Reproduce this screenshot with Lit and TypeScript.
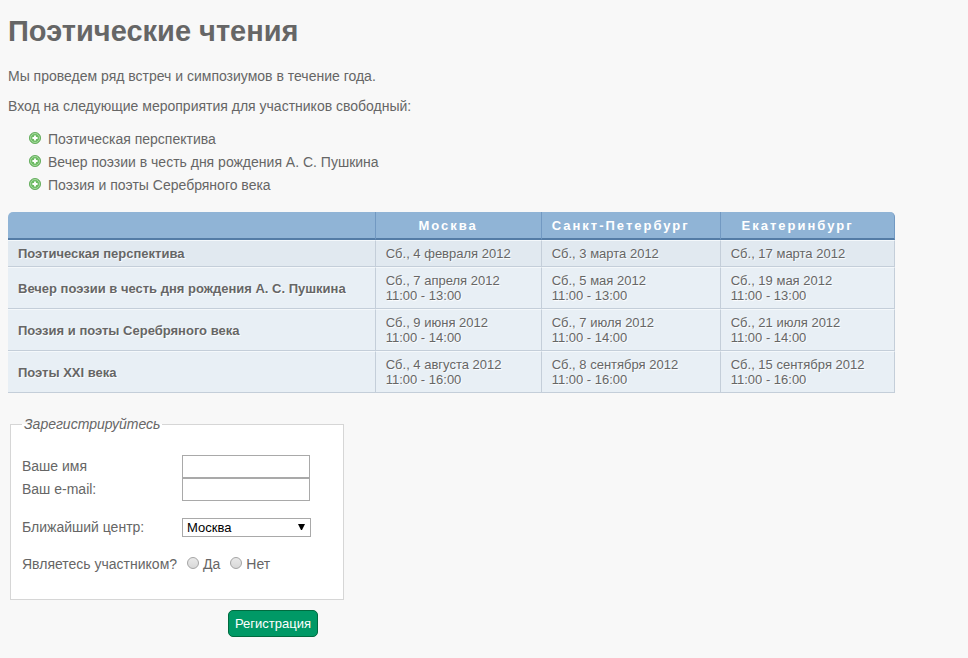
import { LitElement, html, css, svg } from "lit";
import { customElement, state } from "lit/decorators.js";

interface EventRow {
  title: string;
  dates: string[];
  hours?: string;
}

const FREE_EVENTS = [
  "Поэтическая перспектива",
  "Вечер поэзии в честь дня рождения А. С. Пушкина",
  "Поэзия и поэты Серебряного века",
];

const CITIES = ["Москва", "Санкт-Петербург", "Екатеринбург"];

const SCHEDULE: EventRow[] = [
  {
    title: "Поэтическая перспектива",
    dates: ["Сб., 4 февраля 2012", "Сб., 3 марта 2012", "Сб., 17 марта 2012"],
  },
  {
    title: "Вечер поэзии в честь дня рождения А. С. Пушкина",
    dates: ["Сб., 7 апреля 2012", "Сб., 5 мая 2012", "Сб., 19 мая 2012"],
    hours: "11:00 - 13:00",
  },
  {
    title: "Поэзия и поэты Серебряного века",
    dates: ["Сб., 9 июня 2012", "Сб., 7 июля 2012", "Сб., 21 июля 2012"],
    hours: "11:00 - 14:00",
  },
  {
    title: "Поэты XXI века",
    dates: ["Сб., 4 августа 2012", "Сб., 8 сентября 2012", "Сб., 15 сентября 2012"],
    hours: "11:00 - 16:00",
  },
];

const plusIcon = svg`
  <circle cx="6" cy="6" r="5.6" fill="#6cbb62" stroke="#5aa653" stroke-width="0.8"/>
  <circle cx="6" cy="6" r="4.5" fill="none" stroke="#b4dfad" stroke-width="0.8"/>
  <path d="M6 3.4v5.2M3.4 6h5.2" stroke="#fff" stroke-width="1.9"/>`;

@customElement("app-root")
export class AppRoot extends LitElement {
  @state() private member = "";

  static styles = css`
    :host {
      display: block;
      box-sizing: border-box;
      min-height: 100vh;
      padding: 14px 8px 20px;
      background: #f8f8f8;
      color: #666;
      font: 14px/16px "Liberation Sans", Arial, sans-serif;
    }
    .title {
      margin: 0 0 20px;
      font-size: 29px;
      line-height: 34px;
    }
    .text {
      margin: 0 0 14px;
    }
    .events {
      margin: 0 0 15px;
      padding: 0 0 0 20px;
      list-style: none;
      line-height: 23px;
    }
    .event {
      display: flex;
      gap: 7px;
    }
    .icon {
      flex: none;
      width: 12px;
      height: 12px;
      margin: 4px 0 0 1px;
    }
    .schedule {
      border-collapse: separate;
      border-spacing: 0;
      font-size: 13px;
      line-height: 15px;
      text-shadow: 1px 1px 1px #fff;
    }
    .head,
    .name,
    .date {
      padding: 5px 30px 5px 10px;
      border: 0 solid #c4ced9;
      border-width: 1px 1px 1px 0;
      border-top-color: #f4f8fb;
      background: #e8eff5;
      text-align: left;
      white-space: nowrap;
    }
    .name {
      padding-right: 29px;
    }
    .head {
      border-width: 0 1px 2px 0;
      border-color: #7299c2;
      border-bottom-color: #547ca6;
      padding-top: 6px;
      background: #90b4d6;
      color: #fff;
      letter-spacing: 2px;
      text-align: center;
      text-shadow: none;
    }
    .head:first-child {
      border-top-left-radius: 5px;
    }
    .head:last-child {
      border-top-right-radius: 5px;
    }
    .row:first-child > * {
      background: #e1e9f0;
    }
    .form {
      max-width: 334px;
      margin: 23px 2px 0;
    }
    .group {
      min-width: 0;
      margin: 0;
      padding: 23px 11px 27px;
      border: 1px solid #d6d6d6;
      background: #fff;
    }
    .legend {
      padding: 0 2px;
      font-style: italic;
    }
    .field {
      display: flex;
      align-items: center;
    }
    .label {
      width: 160px;
      padding-bottom: 1px;
    }
    .input {
      box-sizing: border-box;
      width: 128px;
      height: 23px;
      padding: 2px 4px;
      border: 1px solid #a9a9a9;
      background: #fff;
      font: inherit;
    }
    .center {
      margin: 17px 0 19px;
    }
    .picker {
      position: relative;
      display: flex;
    }
    .select {
      appearance: none;
      box-sizing: border-box;
      width: 129px;
      height: 19px;
      padding: 0 16px 0 4px;
      border: 1px solid #a9a9a9;
      border-radius: 0;
      background: #fff;
      color: #000;
      font: 13px/17px "Liberation Sans", Arial, sans-serif;
    }
    .arrow {
      position: absolute;
      top: 6px;
      right: 6px;
      width: 7px;
      height: 6px;
      pointer-events: none;
    }
    .choices {
      display: flex;
      align-items: baseline;
    }
    .question {
      min-width: 159px;
    }
    .choice {
      display: flex;
      align-items: baseline;
      gap: 4px;
      margin-left: 6px;
    }
    .choice + .choice {
      margin-left: 10px;
    }
    .radio {
      appearance: none;
      box-sizing: border-box;
      width: 12px;
      height: 12px;
      margin: 0 0 1px;
      border: 1px solid #a4a4a4;
      border-radius: 50%;
      background: linear-gradient(#e9e9e9, #d8d8d8);
    }
    .radio:checked {
      background: radial-gradient(#555 0 3px, #ddd 3px);
    }
    .actions {
      display: flex;
      justify-content: flex-end;
      padding: 10px 26px 0 0;
    }
    .submit {
      padding: 5px 6px;
      border: 1px solid #006b3f;
      border-radius: 5px;
      background: #009966;
      color: #fff;
      font: 13px/15px "Liberation Sans", Arial, sans-serif;
    }
  `;

  private renderChoice(value: string, text: string) {
    return html`<label class="choice"
      ><input
        class="radio"
        type="radio"
        name="member"
        value=${value}
        .checked=${this.member === value}
        @change=${() => (this.member = value)}
      />${text}</label
    >`;
  }

  render() {
    return html`
      <h1 class="title">Поэтические чтения</h1>
      <p class="text">Мы проведем ряд встреч и симпозиумов в течение года.</p>
      <p class="text">Вход на следующие мероприятия для участников свободный:</p>
      <ul class="events">
        ${FREE_EVENTS.map(
          (name) => html`<li class="event">
            <svg class="icon" viewBox="0 0 12 12" aria-hidden="true">${plusIcon}</svg>
            <span>${name}</span>
          </li>`
        )}
      </ul>
      <table class="schedule">
        <thead>
          <tr>
            <th class="head"></th>
            ${CITIES.map((city) => html`<th class="head" scope="col">${city}</th>`)}
          </tr>
        </thead>
        <tbody>
          ${SCHEDULE.map(
            (row) => html`<tr class="row">
              <th class="name" scope="row">${row.title}</th>
              ${row.dates.map(
                (date) =>
                  html`<td class="date">${date}${row.hours ? html`<br />${row.hours}` : ""}</td>`
              )}
            </tr>`
          )}
        </tbody>
      </table>
      <form class="form" @submit=${(e: Event) => e.preventDefault()}>
        <fieldset class="group">
          <legend class="legend">Зарегистрируйтесь</legend>
          <div class="field">
            <label class="label" for="name">Ваше имя</label>
            <input class="input" id="name" type="text" />
          </div>
          <div class="field">
            <label class="label" for="email">Ваш e-mail:</label>
            <input class="input" id="email" type="email" />
          </div>
          <div class="field center">
            <label class="label" for="center">Ближайший центр:</label>
            <div class="picker">
              <select class="select" id="center">
                ${CITIES.map((city) => html`<option>${city}</option>`)}
              </select>
              <svg class="arrow" viewBox="0 0 7 6" aria-hidden="true">
                <path d="M0 0h7L4 6H3z" fill="#000" />
              </svg>
            </div>
          </div>
          <div class="choices" role="radiogroup" aria-labelledby="member">
            <span class="question" id="member">Являетесь участником?</span>
            ${this.renderChoice("yes", "Да")}${this.renderChoice("no", "Нет")}
          </div>
        </fieldset>
        <div class="actions">
          <button class="submit" type="submit">Регистрация</button>
        </div>
      </form>
    `;
  }
}
